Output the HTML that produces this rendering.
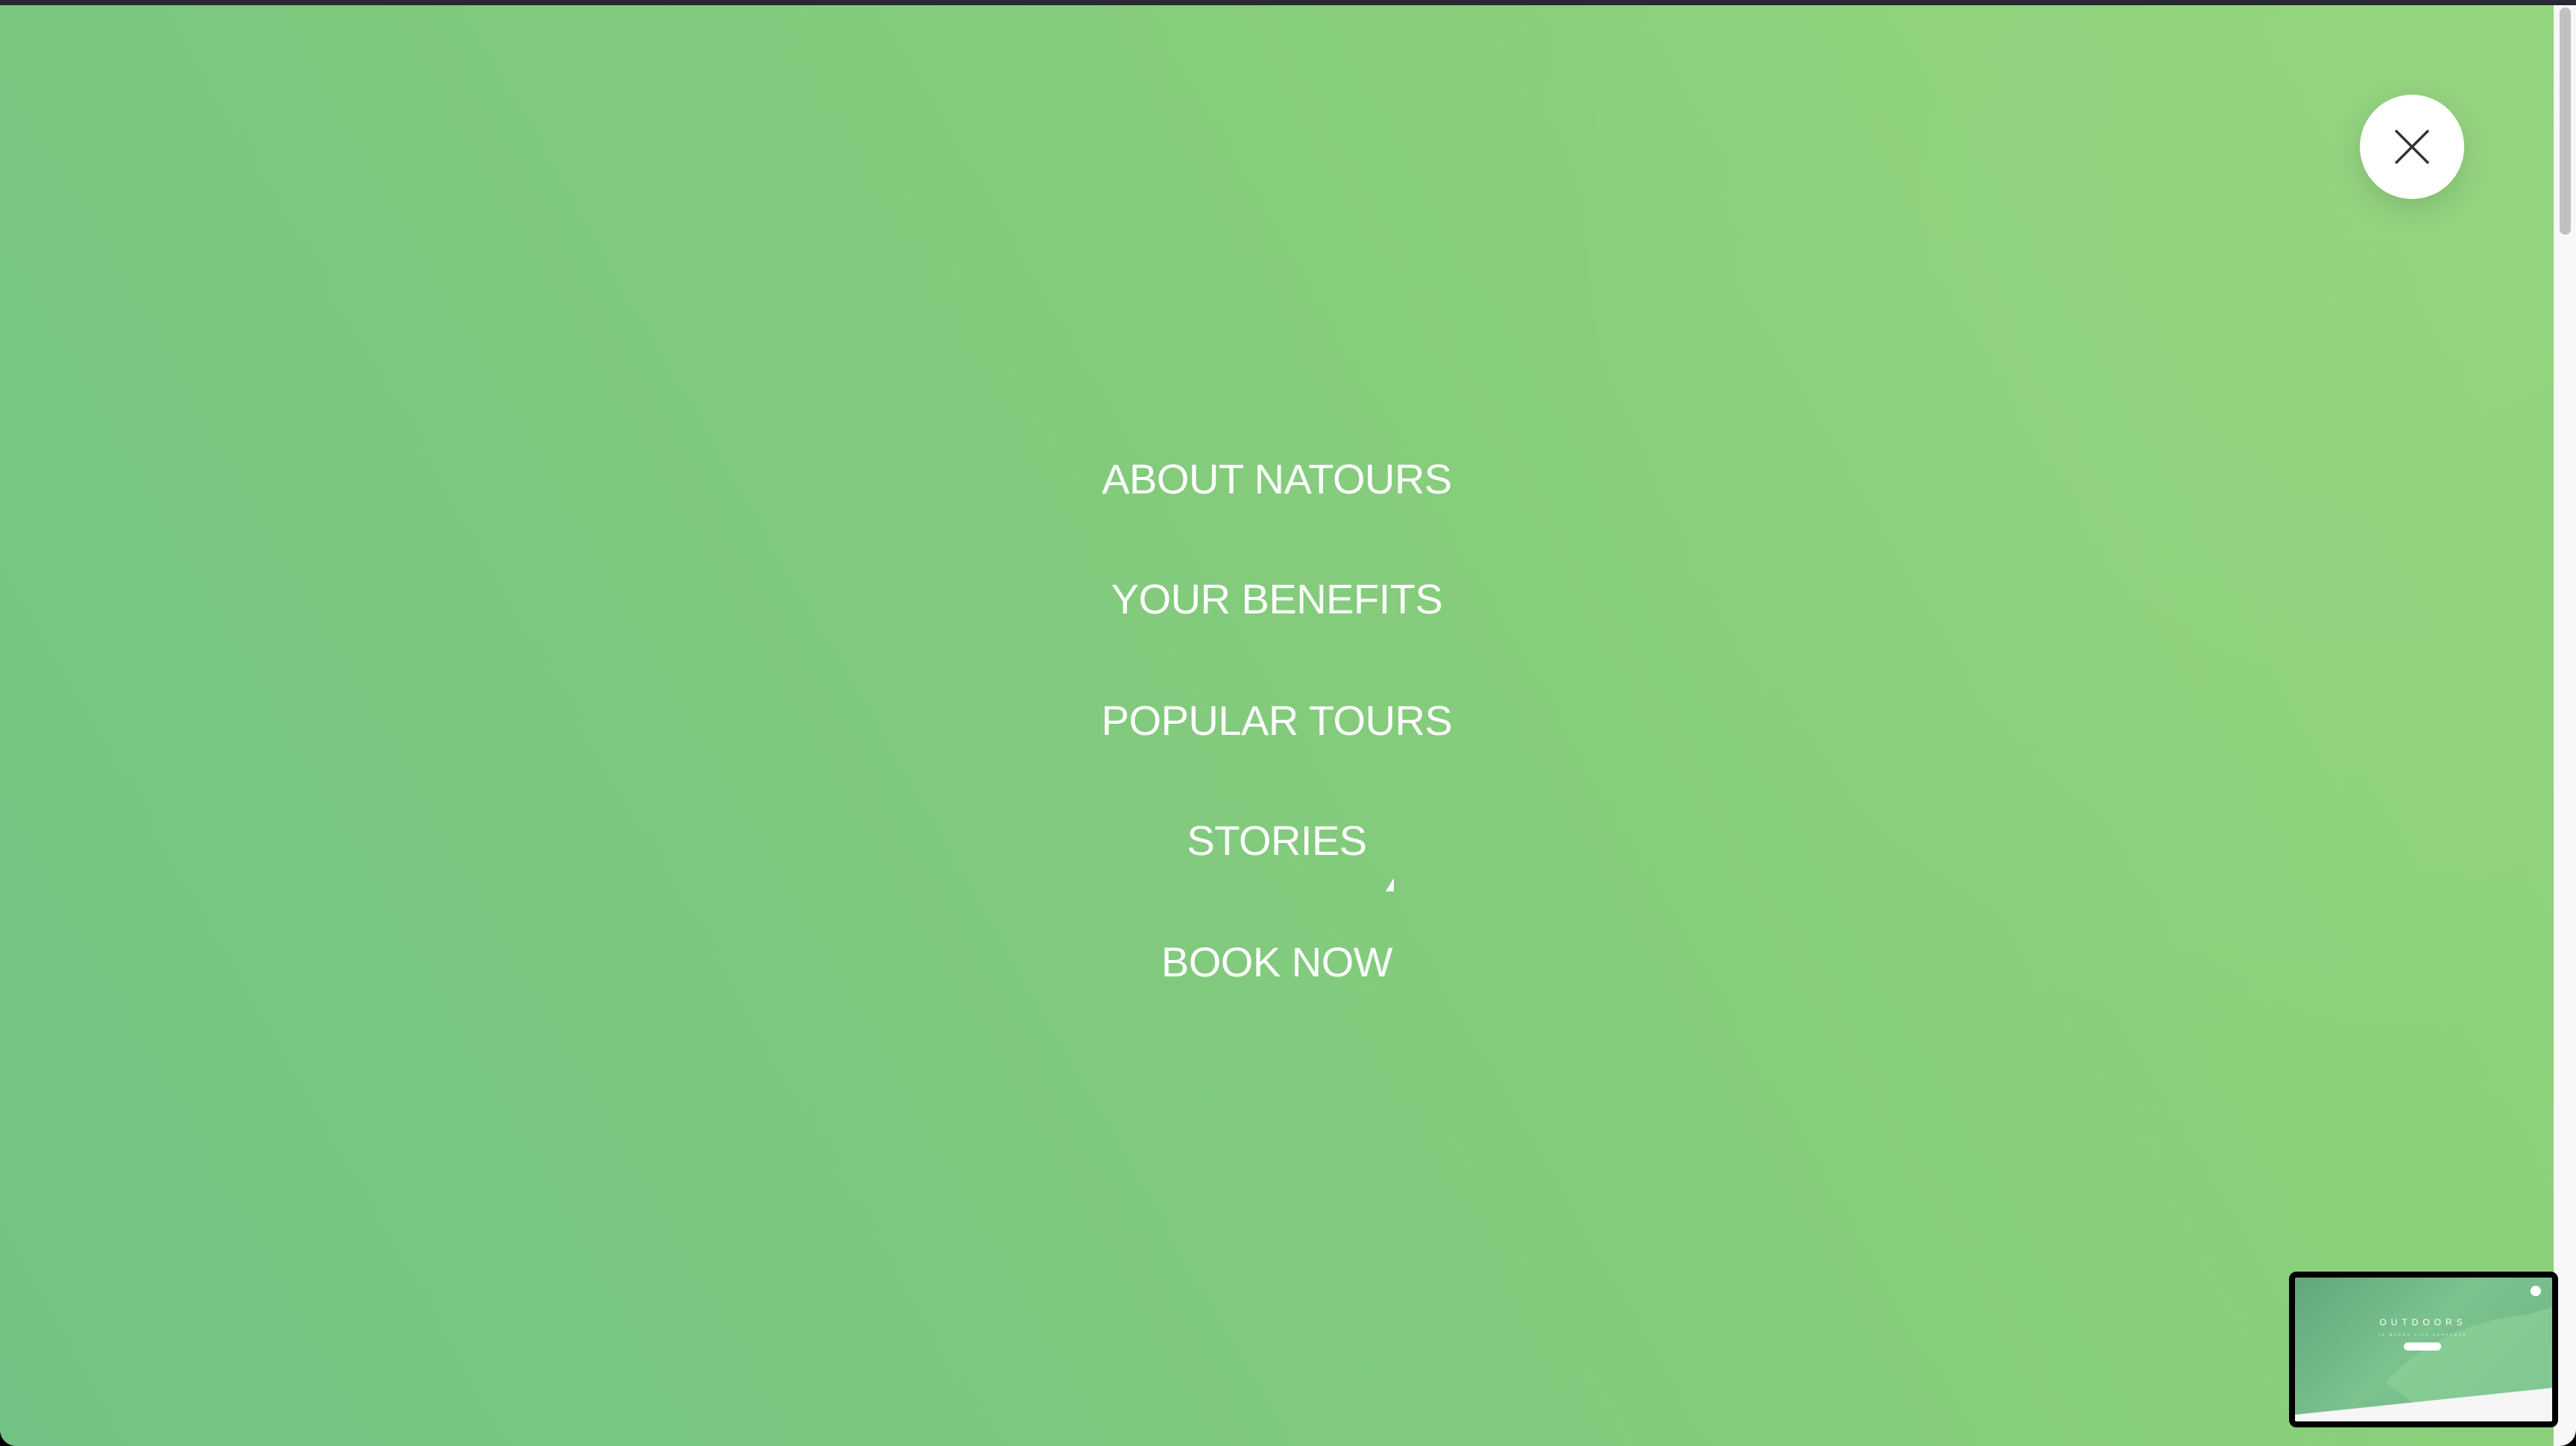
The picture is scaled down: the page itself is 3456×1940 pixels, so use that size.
<!DOCTYPE html>
<html><head><meta charset="utf-8"><style>
html,body{margin:0;padding:0;width:3456px;height:1940px;overflow:hidden;background:#000;}
.top{position:absolute;left:0;top:0;width:3456px;height:7px;background:#2a2833;}
.page{position:absolute;left:0;top:7px;width:3456px;height:1933px;border-radius:0 0 22px 22px;overflow:hidden;background:#f8f8f8;}
.bg{position:absolute;left:0;top:0;width:3426px;height:1933px;background:linear-gradient(60deg,#72c383 0%,#80c97d 40%,#8bd07b 75%,#91d37b 100%);}
.bg:after{content:"";position:absolute;left:1950px;top:-900px;width:2600px;height:2300px;border-radius:50%;background:radial-gradient(circle,rgba(255,255,255,0.04) 0%,rgba(255,255,255,0.02) 60%,rgba(255,255,255,0) 70%);}
.sb{position:absolute;left:3434px;top:3px;width:15px;height:305px;border-radius:8px;background:#c1c1c1;}
.btn{position:absolute;left:3166px;top:120px;width:140px;height:140px;border-radius:50%;background:#fff;box-shadow:0 12px 40px rgba(0,0,0,0.12);}
.nav{position:absolute;left:0;width:3426px;text-align:center;color:#fff;font-family:"Liberation Sans",sans-serif;font-size:56px;line-height:80px;letter-spacing:-0.5px;}
.thumb{position:absolute;left:3071px;top:1699px;width:345px;height:193px;border:8px solid #000;border-radius:10px;overflow:hidden;background:linear-gradient(135deg,#5fa87c 0%,#7cc28f 45%,#6db585 100%);}
</style></head><body>
<div class="top"></div>
<div class="page">
<div class="bg"></div>
<div class="sb"></div>
<div class="btn"><svg width="140" height="140" viewBox="0 0 140 140"><path d="M48 48L92 92M92 48L48 92" stroke="#333" stroke-width="3.5"/></svg></div>
<div class="nav" style="top:596px">ABOUT NATOURS</div>
<div class="nav" style="top:757px">YOUR BENEFITS</div>
<div class="nav" style="top:920px">POPULAR TOURS</div>
<div class="nav" style="top:1081px">STORIES</div>
<div class="nav" style="top:1244px">BOOK NOW</div>
<svg style="position:absolute;left:0;top:-7px" width="3456" height="1940"><polygon points="1859,1196 1870,1178 1870,1196" fill="#fff"/></svg>
<div class="thumb">
<svg width="345" height="193" viewBox="0 0 345 193" style="position:absolute;left:0;top:0">
<path d="M120 140 Q200 60 310 50 L345 40 L345 150 L160 170Z" fill="#8fd29a" opacity="0.6"/>
<polygon points="0,184 345,148 345,193 0,193" fill="#f6f6f6"/>
<text x="172" y="64" fill="#fff" font-family="Liberation Sans" font-size="12" text-anchor="middle" letter-spacing="6">OUTDOORS</text>
<text x="172" y="78" fill="#fff" font-family="Liberation Sans" font-size="4" text-anchor="middle" letter-spacing="3">IS WHERE LIFE HAPPENDS</text>
<rect x="146" y="87" width="50" height="11" rx="5.5" fill="#fff"/>
<circle cx="323" cy="18" r="7" fill="#fff"/>
</svg>
</div>
</div>
</body></html>
